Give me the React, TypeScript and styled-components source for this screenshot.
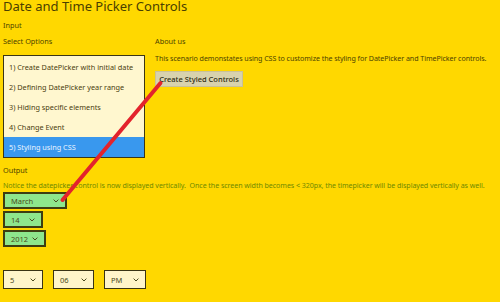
import React from "react";
import styled, { createGlobalStyle } from "styled-components";

const Global = createGlobalStyle`
  html, body { margin: 0; padding: 0; }
  body {
    width: 500px; height: 302px; overflow: hidden;
    background: #ffd800;
    font-family: "Noto Sans", "Open Sans", sans-serif;
    color: #4d4300;
  }
`;

const Page = styled.div`
  position: relative;
  width: 500px;
  height: 302px;
  padding-left: 3px;
  box-sizing: border-box;
`;

const Title = styled.h1`
  margin: -1px 0 0 0;
  font-size: 13px;
  line-height: 14px;
  height: 13px;
  font-weight: 400;
  color: #4a4000;
  white-space: nowrap;
`;

const Label = styled.div<{ $mt: number }>`
  margin-top: ${(p) => p.$mt}px;
  font-size: 7.3px;
  line-height: 11px;
  height: 11px;
  color: #4d4300;
  white-space: nowrap;
`;

const InputSection = styled.div`
  display: grid;
  grid-template-columns: 152px 1fr;
  margin-top: 5px;
`;

const Column = styled.div`
  display: flex;
  flex-direction: column;
  align-items: flex-start;
  min-width: 0;
`;

const ListBox = styled.ul`
  list-style: none;
  margin: 8px 0 0 0;
  padding: 0;
  width: 142px;
  height: 103px;
  box-sizing: border-box;
  border: 1.5px solid #3b3616;
  background: #fff7cf;
  display: flex;
  flex-direction: column;
  justify-content: center;
`;

const Item = styled.li<{ $selected?: boolean }>`
  height: 20px;
  line-height: 20px;
  padding-left: 5px;
  font-size: 7.3px;
  white-space: nowrap;
  color: ${(p) => (p.$selected ? "#eaf4ff" : "#4a4010")};
  background: ${(p) => (p.$selected ? "#3998ee" : "transparent")};
`;

const Text = styled.div<{ $mt: number; $color?: string }>`
  margin-top: ${(p) => p.$mt}px;
  font-size: 7.1px;
  letter-spacing: -0.06px;
  line-height: 11px;
  height: 11px;
  white-space: nowrap;
  color: ${(p) => p.$color || "#4d4300"};
`;

const Button = styled.button`
  margin-top: 7.5px;
  height: 16px;
  width: 88px;
  padding: 0;
  border: 1px solid #c9c197;
  background: #d8d2ad;
  color: #2d2a10;
  font-family: "Noto Sans", sans-serif;
  font-size: 7.5px;
  font-weight: 500;
  white-space: nowrap;
`;

const DateStack = styled.div`
  display: flex;
  flex-direction: column;
  align-items: flex-start;
  gap: 2px;
  margin-top: 1.5px;
`;

const Select = styled.div<{ $w: number; $variant: "date" | "time" }>`
  width: ${(p) => p.$w}px;
  height: ${(p) => (p.$variant === "date" ? 17 : 19)}px;
  box-sizing: border-box;
  border: ${(p) => (p.$variant === "date" ? "2px solid #3d3d12" : "1.5px solid #3a3414")};
  background: ${(p) => (p.$variant === "date" ? "#8ee68c" : "#fff5c9")};
  display: flex;
  align-items: center;
  justify-content: space-between;
  padding: 0 6px 0 6px;
  font-size: 7.5px;
  color: #4a4a20;
`;

const TimeRow = styled.div`
  display: flex;
  gap: 10px;
  margin-top: 23px;
`;

const Overlay = styled.svg`
  position: absolute;
  left: 0;
  top: 0;
  pointer-events: none;
`;

const Chevron = () => (
  <svg width="6" height="4" viewBox="0 0 6 4">
    <polyline points="0.6,0.6 3,3 5.4,0.6" fill="none" stroke="#4a4a20" strokeWidth="1" />
  </svg>
);

const Picker = ({ value, w, variant }: { value: string; w: number; variant: "date" | "time" }) => (
  <Select $w={w} $variant={variant}>
    <span>{value}</span>
    <Chevron />
  </Select>
);

export default function App() {
  return (
    <>
      <Global />
      <Page>
        <Title>Date and Time Picker Controls</Title>
        <Label $mt={8}>Input</Label>
        <InputSection>
          <Column>
            <Label $mt={0}>Select Options</Label>
            <ListBox>
              <Item>1) Create DatePicker with initial date</Item>
              <Item>2) Defining DatePicker year range</Item>
              <Item>3) Hiding specific elements</Item>
              <Item>4) Change Event</Item>
              <Item $selected>5) Styling using CSS</Item>
            </ListBox>
          </Column>
          <Column>
            <Label $mt={0}>About us</Label>
            <Text $mt={5.5}>
              This scenario demonstates using CSS to customize the styling for DatePicker and TimePicker controls.
            </Text>
            <Button>Create Styled Controls</Button>
          </Column>
        </InputSection>
        <Label $mt={6.5}>Output</Label>
        <Text $mt={4} $color="#6f8a00">
          Notice the datepicker control is now displayed vertically.&nbsp; Once the screen width becomes &lt; 320px, the timepicker will be displayed vertically as well.
        </Text>
        <DateStack>
          <Picker value="March" w={64} variant="date" />
          <Picker value="14" w={40} variant="date" />
          <Picker value="2012" w={43} variant="date" />
        </DateStack>
        <TimeRow>
          <Picker value="5" w={40} variant="time" />
          <Picker value="06" w={41} variant="time" />
          <Picker value="PM" w={42} variant="time" />
        </TimeRow>
        <Overlay width="500" height="302" viewBox="0 0 500 302">
          <line x1="160.5" y1="84" x2="62.5" y2="201" stroke="#e3232c" strokeWidth="4" strokeLinecap="round" />
        </Overlay>
      </Page>
    </>
  );
}
